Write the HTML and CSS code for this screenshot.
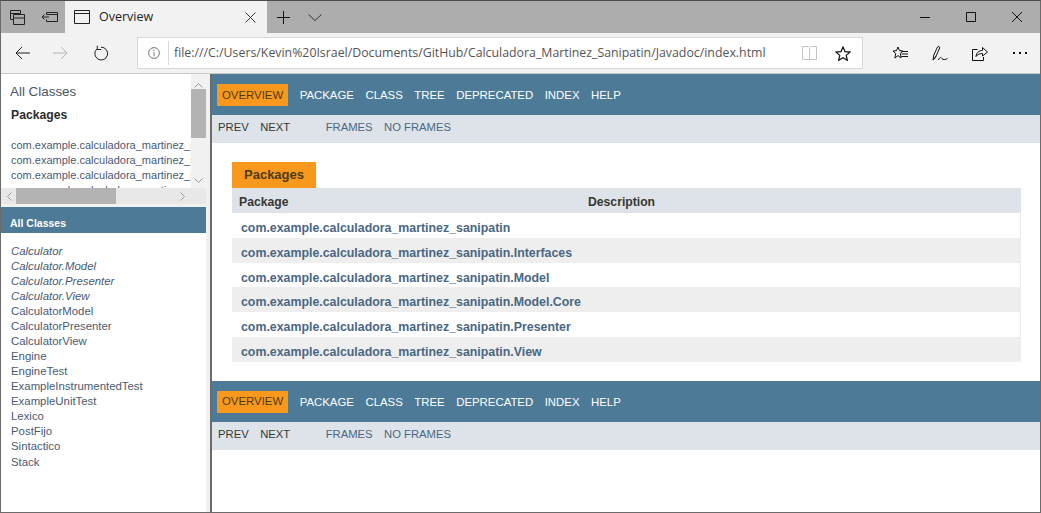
FILE: index.html
```html
<!DOCTYPE html>
<html lang="en">
<head>
<meta charset="utf-8">
<title>Overview</title>
<link rel="stylesheet" href="styles.css">
</head>
<body>
<div class="window">
  <div class="titlebar">
    <div class="tb-left">
      <svg width="15" height="15" viewBox="0 0 15 15"><path d="M.5.500h10v3M.5.500v9h3M.5 3.500h10M3.500 4.500h11v10h-11zM3.500 8h11" fill="none" stroke="#222"/></svg>
      <svg width="17" height="10" viewBox="0 0 17 10"><path d="M5.500 2.500v-2h11v9h-11v-2M5.500 2.500h11M8 5h-7M3.500 2.500l-2.500 2.500 2.500 2.500" fill="none" stroke="#222"/></svg>
    </div>
    <div class="tab">
      <svg width="16" height="14" viewBox="0 0 16 14"><path d="M.5.500h15v13h-15zM.5 3.500h15" fill="none" stroke="#222"/></svg>
      <span class="tab-title">Overview</span>
      <svg class="tab-x" width="11" height="11" viewBox="0 0 11 11"><path d="M.5.500l10 10M10.500.500l-10 10" stroke="#333" fill="none"/></svg>
    </div>
    <div class="tb-new">
      <svg width="13" height="13" viewBox="0 0 13 13"><path d="M6.500 0v13M0 6.500h13" stroke="#111" fill="none"/></svg>
      <svg width="14" height="7" viewBox="0 0 14 7"><path d="M.5.500l6.500 6 6.500-6" stroke="#333" fill="none"/></svg>
    </div>
    <div class="win-ctrl">
      <svg width="10" height="10" viewBox="0 0 10 10"><path d="M0 5.500h10" stroke="#111"/></svg>
      <svg width="10" height="10" viewBox="0 0 10 10"><path d="M.5.500h9v9h-9z" fill="none" stroke="#111"/></svg>
      <svg width="10" height="10" viewBox="0 0 10 10"><path d="M0 0l10 10M10 0l-10 10" fill="none" stroke="#111"/></svg>
    </div>
  </div>
  <div class="toolbar">
    <div class="nav">
      <svg width="15" height="14" viewBox="0 0 15 14"><path d="M15 7h-14M7 1l-6 6 6 6" fill="none" stroke="#222"/></svg>
      <svg width="15" height="14" viewBox="0 0 15 14"><path d="M0 7h14M8 1l6 6-6 6" fill="none" stroke="#b5b5b5"/></svg>
      <svg class="reload" width="15" height="16" viewBox="0 0 15 16"><path d="M7 2.200A6.400 6.400 0 1 1 2.800 4M3.300 .7v3.800h3.900" fill="none" stroke="#222"/></svg>
    </div>
    <div class="address">
      <svg class="info" width="12" height="12" viewBox="0 0 12 12"><circle cx="6" cy="6" r="5.400" fill="none" stroke="#777"/><path d="M6 5v4.200M6 2.600v1.300" stroke="#777" fill="none"/></svg>
      <span class="url">file:///C:/Users/Kevin%20Israel/Documents/GitHub/Calculadora_Martinez_Sanipatin/Javadoc/index.html</span>
      <svg class="book" width="15" height="14" viewBox="0 0 15 14"><path d="M.5.500h6l1 1 1-1h6v13h-14zM7.500 1.500v12" fill="none" stroke="#c4c4c4"/></svg>
      <svg width="16" height="15" viewBox="0 0 16 15"><path d="M8 1l2 4.600 5 .5-3.800 3.300 1.200 4.900-4.400-2.600-4.400 2.600 1.200-4.900-3.800-3.300 5-.5z" fill="none" stroke="#111" stroke-width="1.200"/></svg>
    </div>
    <div class="tools">
      <svg width="16" height="15" viewBox="0 0 16 15"><path d="M6 1l1.500 3.600 3.500.4-2.700 2.400.8 4.600-3.100-2.400-3.100 2.400.8-4.600-2.700-2.400 3.500-.4zM9.500 5.500h6.500M9.500 8h6.500M9.500 10.500h6.500" fill="none" stroke="#111"/></svg>
      <svg width="16" height="17" viewBox="0 0 16 17"><path d="M1 15l.8-5 3.700-8c.6-1.200 2.700-.3 2.200 1l-3.700 8.200zM1 15c1-.7 2.300-1.500 3-3.800M6.500 15c1-3 2.500-3 3.500-1.500 1.200 1.500 3 1.500 5.500 0" fill="none" stroke="#111"/></svg>
      <svg width="16" height="15" viewBox="0 0 16 15"><path d="M5.500 3.500h-5v11h11v-3.500M4 10.500c.5-4 3-6 6.500-6v-3l5 4.500-5 4v-2.500c-3 0-5 1-6.500 3z" fill="none" stroke="#111"/></svg>
      <span class="dots"><i></i><i></i><i></i></span>
    </div>
  </div>
  <div class="viewport">
    <div class="sidebar">
      <div class="pkg-frame">
        <div class="pkg-view">
          <div class="pkg-head">All Classes</div>
          <div class="pkg-title">Packages</div>
          <ul class="pkg-list">
            <li>com.example.calculadora_martinez_sanipatin</li>
            <li>com.example.calculadora_martinez_sanipatin.Interfaces</li>
            <li>com.example.calculadora_martinez_sanipatin.Model</li>
            <li>com.example.calculadora_martinez_sanipatin.View</li>
          </ul>
        </div>
        <div class="vscroll">
          <svg width="9" height="5" viewBox="0 0 9 5"><path d="M.5 4.500l4-4 4 4" fill="none" stroke="#999"/></svg>
          <div class="vthumb"></div>
          <svg class="vdown" width="9" height="5" viewBox="0 0 9 5"><path d="M.5.500l4 4 4-4" fill="none" stroke="#999"/></svg>
        </div>
        <div class="hscroll">
          <svg width="5" height="9" viewBox="0 0 5 9"><path d="M4.500.5l-4 4 4 4" fill="none" stroke="#999"/></svg>
          <div class="hthumb"></div>
          <svg class="hright" width="5" height="9" viewBox="0 0 5 9"><path d="M.5.500l4 4-4 4" fill="none" stroke="#999"/></svg>
        </div>
      </div>
      <div class="classes-frame">
        <div class="classes-bar">All Classes</div>
        <ul class="class-list">
          <li class="it">Calculator</li>
          <li class="it">Calculator.Model</li>
          <li class="it">Calculator.Presenter</li>
          <li class="it">Calculator.View</li>
          <li>CalculatorModel</li>
          <li>CalculatorPresenter</li>
          <li>CalculatorView</li>
          <li>Engine</li>
          <li>EngineTest</li>
          <li>ExampleInstrumentedTest</li>
          <li>ExampleUnitTest</li>
          <li>Lexico</li>
          <li>PostFijo</li>
          <li>Sintactico</li>
          <li>Stack</li>
        </ul>
      </div>
    </div>
    <div class="main">
      <div class="nav-top">
        <span class="active">OVERVIEW</span><span>PACKAGE</span><span>CLASS</span><span>TREE</span><span>DEPRECATED</span><span>INDEX</span><span>HELP</span>
      </div>
      <div class="sub-nav">
        <span class="dark">PREV</span><span class="dark">NEXT</span><span class="frames">FRAMES</span><span>NO FRAMES</span>
      </div>
      <div class="content">
        <div class="caption">Packages</div>
        <div class="row head"><span class="c1">Package</span><span>Description</span></div>
        <div class="row"><a>com.example.calculadora_martinez_sanipatin</a></div>
        <div class="row alt"><a>com.example.calculadora_martinez_sanipatin.Interfaces</a></div>
        <div class="row"><a>com.example.calculadora_martinez_sanipatin.Model</a></div>
        <div class="row alt"><a>com.example.calculadora_martinez_sanipatin.Model.Core</a></div>
        <div class="row"><a>com.example.calculadora_martinez_sanipatin.Presenter</a></div>
        <div class="row alt"><a>com.example.calculadora_martinez_sanipatin.View</a></div>
      </div>
      <div class="nav-top">
        <span class="active">OVERVIEW</span><span>PACKAGE</span><span>CLASS</span><span>TREE</span><span>DEPRECATED</span><span>INDEX</span><span>HELP</span>
      </div>
      <div class="sub-nav">
        <span class="dark">PREV</span><span class="dark">NEXT</span><span class="frames">FRAMES</span><span>NO FRAMES</span>
      </div>
    </div>
  </div>
</div>
</body>
</html>
```
FILE: styles.css
```css
* { box-sizing: border-box; }
html, body { margin: 0; padding: 0; height: 100%; overflow: hidden; }
body { font-family: "Liberation Sans", Arial, sans-serif; background: #fff; }
ul { list-style: none; margin: 0; padding: 0; }
svg { display: block; flex: none; }

.window {
  width: 1041px; height: 513px;
  border: 1px solid #6b6b6b; border-top-color: #4a4a4a;
  display: flex; flex-direction: column;
  background: #fff;
}

.titlebar { height: 32px; flex: none; background: #adadad; display: flex; align-items: center; }
.tb-left { width: 64px; display: flex; align-items: center; gap: 16px; padding-left: 9px; }
.tab {
  width: 202px; height: 32px; background: #f2f2f2;
  display: flex; align-items: center; padding-left: 9px;
}
.tab-title { font: 12.500px "Open Sans", sans-serif; color: #222; margin: 0 0 2px 9px; flex: 1; }
.tab-x { margin-right: 11px; }
.tb-new { display: flex; align-items: center; gap: 18px; padding-left: 10px; }
.win-ctrl { margin-left: auto; display: flex; align-items: center; gap: 36px; padding-right: 18px; }

.toolbar { height: 41px; flex: none; background: #f2f2f2; display: flex; align-items: center; border-bottom: 1px solid #c9c9c9; }
.nav { width: 136px; display: flex; align-items: center; gap: 23px; padding-left: 14px; }
.reload { margin-left: 3px; }
.address {
  width: 726px; height: 32px; background: #fff; border: 1px solid #d5d9dc;
  display: flex; align-items: center; padding: 0 11px 0 10px;
}
.info { margin-right: 8px; }
.url {
  font: 12.330px "Open Sans", sans-serif; color: #555; flex: 1; white-space: nowrap;
  border-left: 1px solid #d9d9d9; padding-left: 5px; line-height: 24px;
}
.book { margin-right: 18px; }
.tools { flex: 1; display: flex; align-items: center; gap: 24px; padding-left: 29px; }
.dots { display: flex; gap: 4px; margin-left: 1px; }
.dots i { width: 2px; height: 2px; background: #111; }

.viewport { flex: 1; min-height: 0; display: flex; }

.sidebar { width: 211px; flex: none; background: #f1f1f1; border-right: 2px solid #6b6b6b; display: flex; flex-direction: column; padding-right: 4px; }
.pkg-frame {
  height: 130px; flex: none; background: #fff;
  display: grid; grid-template-columns: 190px 15px; grid-template-rows: 114px 16px;
}
.pkg-view { overflow: hidden; padding-left: 9px; white-space: nowrap; }
.pkg-head { font-size: 13.400px; color: #4a5563; line-height: 16px; margin-top: 10px; }
.pkg-title { font-size: 12.200px; font-weight: bold; color: #2c2c2c; line-height: 16px; margin: 7px 0 0 1px; }
.pkg-list { margin: 15px 0 0 1px; font-size: 11px; color: #4a5a70; }
.pkg-list li { height: 15px; line-height: 15px; }
.vscroll { background: #f1f1f1; grid-row: 1; grid-column: 2; display: flex; flex-direction: column; align-items: center; padding-top: 9px; }
.vthumb { width: 15px; height: 49px; margin-top: 1px; background: #b3b3b3; }
.vdown { margin-top: auto; margin-bottom: 5px; }
.hscroll { grid-column: 1 / span 2; background: #e8e8e8; display: flex; align-items: center; padding-left: 6px; }
.hthumb { width: 100px; height: 16px; margin-left: 4px; background: #b3b3b3; }
.hright { margin-left: 64px; }

.classes-frame { flex: 1; background: #fff; margin-top: 3px; }
.classes-bar { height: 26px; background: #4d7a97; color: #fff; font-size: 10.500px; font-weight: bold; line-height: 20px; padding: 6px 0 0 9px; }
.class-list { padding: 11px 0 0 10px; font-size: 11.400px; color: #4a5a70; }
.class-list li { height: 15px; line-height: 15px; }
.class-list li:last-child { margin-top: 1px; }
.it { font-style: italic; }

.main { flex: 1; min-width: 0; background: #fff; }
.nav-top {
  height: 41px; background: #4d7a97; color: #fff; font-size: 11.400px;
  display: flex; align-items: center; padding: 1px 0 0 5px; gap: 11.500px;
}
.active { background: #f8981d; color: #4d3a1a; padding: 4.500px 5px; line-height: 13px; }
.sub-nav {
  height: 28px; background: #dee3e9; color: #4a6782; font-size: 11.250px;
  display: flex; align-items: center; padding: 0 0 4px 6px; gap: 11.500px;
}
.dark { color: #353833; }
.frames { margin-left: 24px; }
.content { padding: 19px 19px 19px 20px; }
.caption {
  width: 84px; height: 26px; background: #f8981d; color: #4d3a1a;
  font-size: 13px; font-weight: bold; line-height: 25px; padding-left: 12px;
}
.row { height: 24.830px; line-height: 24px; padding: 3px 0 0 9px; font-size: 12.370px; font-weight: bold; color: #4a6782; background: #fff; border-right: 1px solid #eee; white-space: nowrap; }
.row.alt { background: #eeeeef; }
.row.head { height: 25px; line-height: 23px; background: #dee3e9; color: #353833; padding-left: 7px; display: flex; font-size: 12.200px; border: 0; }
.c1 { width: 349px; }
```
